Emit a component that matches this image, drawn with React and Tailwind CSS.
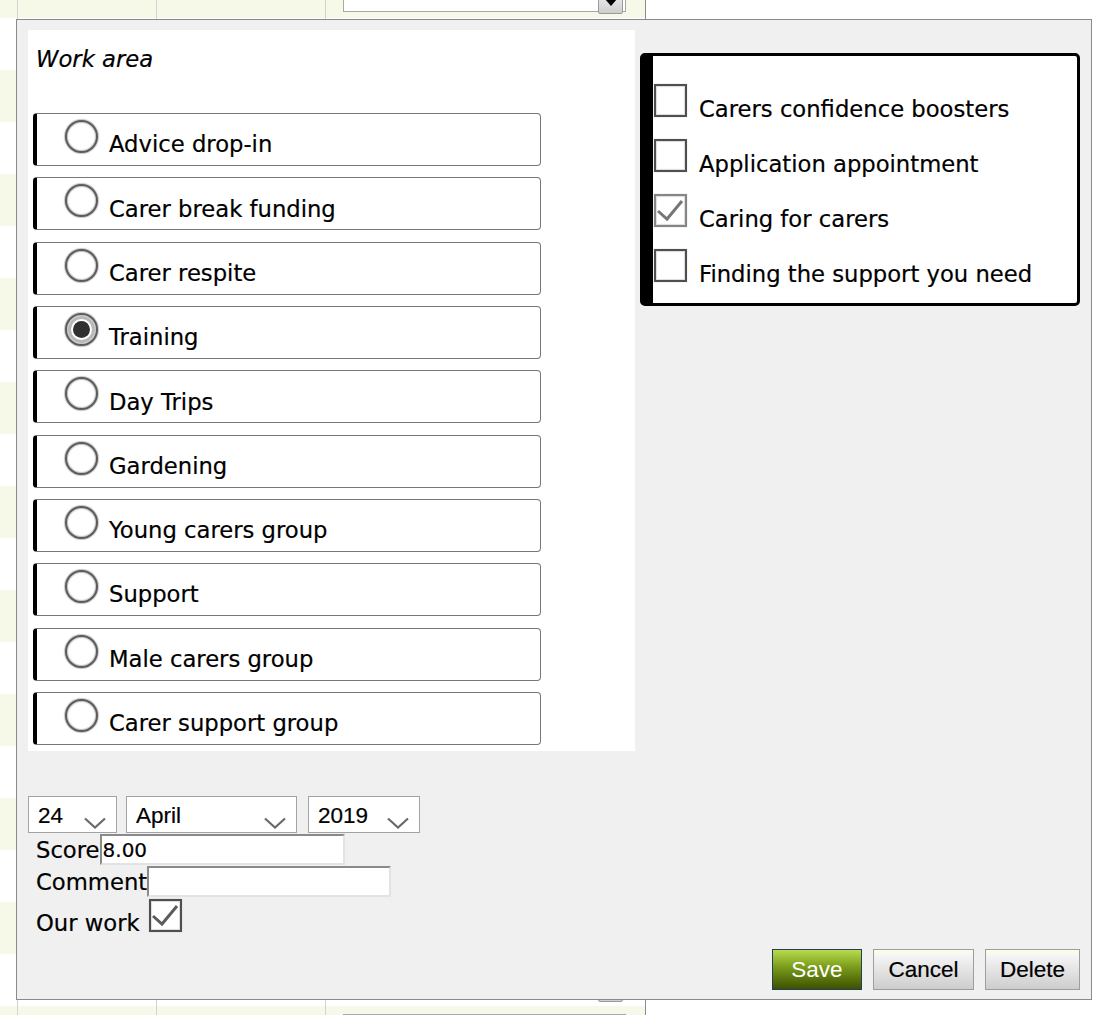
import React from "react";

const radios = [
  ["Advice drop-in", false],
  ["Carer break funding", false],
  ["Carer respite", false],
  ["Training", true],
  ["Day Trips", false],
  ["Gardening", false],
  ["Young carers group", false],
  ["Support", false],
  ["Male carers group", false],
  ["Carer support group", false],
];

const checks = [
  ["Carers confidence boosters", false],
  ["Application appointment", false],
  ["Caring for carers", true],
  ["Finding the support you need", false],
];

function Radio({ checked }) {
  return (
    <div className="w-[33px] h-[33px] shrink-0 rounded-full border-2 border-[#5c5c5c] bg-white shadow-[0_0_1px_1px_#c4c4c4,inset_0_0_1px_1px_#c4c4c4] flex items-center justify-center">
      {checked && (
        <div className="w-[17px] h-[17px] rounded-full bg-[#303030] shadow-[0_0_0_2px_#ffffff,0_0_0_5px_#b8b8b8]" />
      )}
    </div>
  );
}

function Check({ checked, light }) {
  return (
    <div
      className={
        "w-[33px] h-[33px] shrink-0 border-2 bg-white shadow-[0_0_1px_0_#bdbdbd,inset_0_0_1px_1px_#dcdcdc] " +
        (light ? "border-[#858585]" : "border-[#4f4f4f]")
      }
    >
      {checked && (
        <svg width="29" height="29" viewBox="0 0 29 29">
          <path d="M2 15 L11 23 L26 5" fill="none" stroke={light ? "#767676" : "#5c5c5c"} strokeWidth="3" />
        </svg>
      )}
    </div>
  );
}

function Chevron() {
  return (
    <svg width="22" height="12" viewBox="0 0 22 12" className="ml-auto mr-[10px] mt-[20px] shrink-0">
      <polyline points="1,1.5 11,10.5 21,1.5" fill="none" stroke="#6a6a6a" strokeWidth="2.2" />
    </svg>
  );
}

function Select({ w, value }) {
  return (
    <div className={"flex h-[37px] border border-[#a3a3a3] bg-white " + w}>
      <span className="pl-[9px] mt-[6px] leading-[25px] text-[22.5px] font-['Liberation_Sans',Arial,sans-serif]">
        {value}
      </span>
      <Chevron />
    </div>
  );
}

function BgSelect() {
  return (
    <div className="relative w-[283px] h-[26px] border border-[#a8a8a8] bg-white">
      <div className="absolute right-[2px] bottom-[-3px] w-[25px] h-[26px] border border-[#9a9a9a] rounded-[2px] bg-[linear-gradient(to_bottom,#f4f4f4,#cfcfcf)] flex items-start justify-center pt-[10px]">
        <div className="w-0 h-0 border-l-[6px] border-r-[6px] border-t-[7px] border-l-transparent border-r-transparent border-t-black" />
      </div>
    </div>
  );
}

const bgRows = Array.from({ length: 21 });

export default function App() {
  return (
    <div className="relative w-[1104px] h-[1015px] overflow-hidden bg-white font-['DejaVu_Sans',Verdana,sans-serif] text-black">
      {/* background table */}
      <div className="w-[646px] mt-[-34px] border-r border-[#8c8c8c]">
        {bgRows.map((_, i) => (
          <div
            key={i}
            className={"flex h-[52px] " + (i % 2 === 0 ? "bg-[#f7f9e8]" : "bg-white")}
          >
            <div className="w-[18px] border-r border-[#d2d2d2]" />
            <div className="w-[139px] border-r border-[#d2d2d2]" />
            <div className="w-[169px] border-r border-[#d2d2d2]" />
            <div
              className={
                "flex-1 flex pl-[17px] " +
                (i === 20 ? "items-start pt-[8px]" : "items-end pb-[6px]")
              }
            >
              <BgSelect />
            </div>
          </div>
        ))}
      </div>

      {/* dialog */}
      <div className="absolute left-[16px] top-[19px] w-[1076px] h-[981px] border border-[#8a8a8a] bg-[#f0f0f0] pl-[11px] pr-[11px] pt-[10px] flex flex-col">
        <div className="flex items-start">
          {/* left panel */}
          <div className="w-[607px] h-[721px] shrink-0 bg-white">
            <div className="pl-[8px] pt-[16px] italic text-[22.7px] leading-[27px] [-webkit-text-stroke:0.2px_black]">Work area</div>
            <div className="mt-[40px] pl-[5px] flex flex-col gap-[11.33px]">
              {radios.map(([label, checked]) => (
                <div
                  key={label}
                  className="w-[508px] h-[53px] flex items-start border border-[#777777] border-l-4 border-l-black rounded-[4px]"
                >
                  <div className="ml-[28px] mt-[6px]">
                    <Radio checked={checked} />
                  </div>
                  <span className="ml-[11px] mt-[17.2px] text-[22.7px] leading-[27px] whitespace-nowrap [-webkit-text-stroke:0.2px_black]">
                    {label}
                  </span>
                </div>
              ))}
            </div>
          </div>

          {/* right panel */}
          <div className="ml-[5px] mt-[23px] flex-1 border-[3px] border-l-[13px] border-black rounded-[5px] bg-white pt-[28px] pb-[21px] flex flex-col gap-[22px]">
            {checks.map(([label, checked]) => (
              <div key={label} className="flex items-start h-[33px]">
                <div className="ml-[1px]">
                  <Check checked={checked} light={checked} />
                </div>
                <span className="ml-[12px] mt-[11.6px] text-[22.7px] leading-[27px] whitespace-nowrap [-webkit-text-stroke:0.2px_black]">
                  {label}
                </span>
              </div>
            ))}
          </div>
        </div>

        {/* date + fields */}
        <div className="mt-[45px] flex flex-col [-webkit-text-stroke:0.2px_black]">
          <div className="flex">
            <Select w="w-[89px]" value="24" />
            <div className="ml-[9px]">
              <Select w="w-[171px]" value="April" />
            </div>
            <div className="ml-[11px]">
              <Select w="w-[112px]" value="2019" />
            </div>
          </div>

          <div className="mt-[1px] flex items-start h-[31px]">
            <span className="pl-[8px] mt-[2.6px] text-[22.7px] leading-[27px]">Score</span>
            <div className="w-[245px] h-[31px] border-2 border-t-[#8a8a8a] border-l-[#8a8a8a] border-b-[#e3e3e3] border-r-[#e3e3e3] bg-white pl-[1px] pt-[2px] text-[20px] leading-[24px]">
              8.00
            </div>
          </div>

          <div className="mt-[1px] flex items-start h-[31px]">
            <span className="pl-[8px] mt-[2.6px] text-[22.7px] leading-[27px]">Comment</span>
            <div className="w-[244px] h-[31px] border-2 border-t-[#8a8a8a] border-l-[#8a8a8a] border-b-[#e3e3e3] border-r-[#e3e3e3] bg-white" />
          </div>

          <div className="mt-[2px] flex items-start h-[33px]">
            <span className="pl-[8px] mt-[10.6px] text-[22.7px] leading-[27px]">Our work</span>
            <div className="ml-[9px]">
              <Check checked={true} light={false} />
            </div>
          </div>
        </div>

        {/* buttons */}
        <div className="mt-auto mb-[9px] flex justify-end gap-[11px] font-['Liberation_Sans',Arial,sans-serif] text-[22.5px] leading-[25px]">
          <div className="w-[90px] h-[41px] border border-[#243e5a] bg-[linear-gradient(to_bottom,#b8dc50,#7c9e1c_42%,#3d5100)] text-white flex items-center justify-center">
            Save
          </div>
          <div className="w-[101px] h-[41px] border border-[#9e9e9e] bg-[linear-gradient(to_bottom,#fdfde6,#f6f6f6_12%,#cdcdcd)] flex items-center justify-center [-webkit-text-stroke:0.2px_black]">
            Cancel
          </div>
          <div className="w-[95px] h-[41px] border border-[#9e9e9e] bg-[linear-gradient(to_bottom,#fdfde6,#f6f6f6_12%,#cdcdcd)] flex items-center justify-center [-webkit-text-stroke:0.2px_black]">
            Delete
          </div>
        </div>
      </div>
    </div>
  );
}
